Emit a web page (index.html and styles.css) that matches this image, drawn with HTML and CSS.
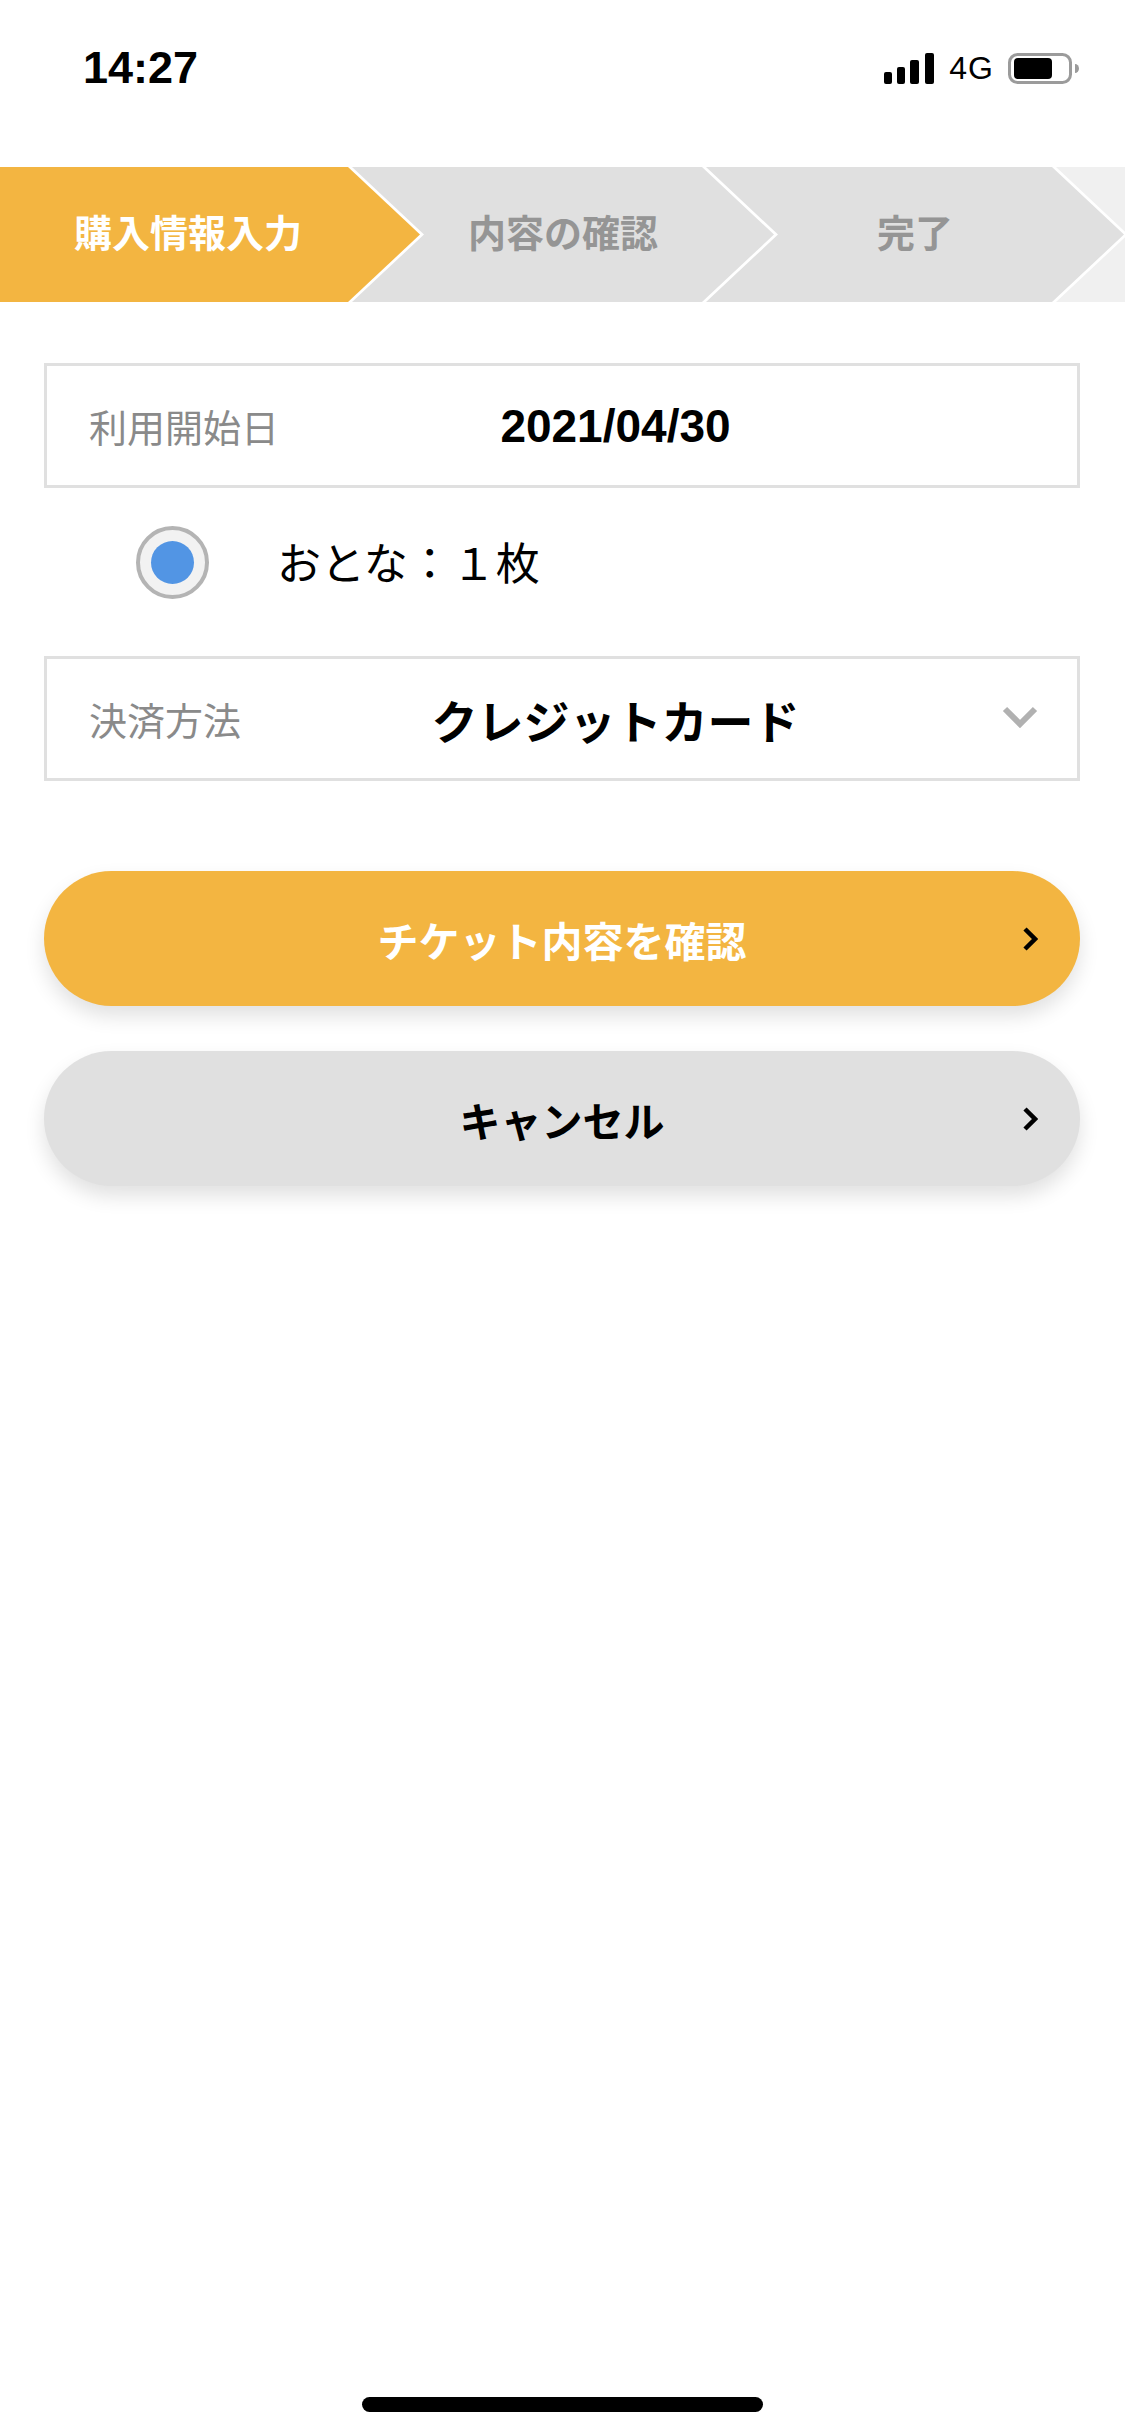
FILE: index.html
```html
<!DOCTYPE html>
<html lang="ja">
<head>
    <meta charset="UTF-8">
    <title>購入情報入力</title>
    <link rel="stylesheet" href="styles.css">
</head>
<body>
    <div class="screen">
        <div class="status-bar">
            <span class="clock">14:27</span>
            <div class="status-icons">
                <svg width="51" height="31" viewBox="0 0 51 31">
                    <rect x="0" y="19" width="8" height="12" rx="2" fill="#000"/>
                    <rect x="13" y="14" width="8" height="17" rx="2" fill="#000"/>
                    <rect x="26" y="7" width="9" height="24" rx="2" fill="#000"/>
                    <rect x="41" y="0" width="9" height="31" rx="2" fill="#000"/>
                </svg>
                <span class="network">4G</span>
                <svg width="73" height="31" viewBox="0 0 73 31">
                    <rect x="1.5" y="1.5" width="61" height="28" rx="8" fill="none" stroke="#9b9b9b" stroke-width="3"/>
                    <rect x="6" y="5" width="38" height="21" rx="4" fill="#000"/>
                    <path d="M67 11 a4 4.5 0 0 1 0 9 z" fill="#9b9b9b"/>
                </svg>
            </div>
        </div>

        <div class="steps">
            <div class="step step-first is-active">購入情報入力</div>
            <div class="step step-mid">内容の確認</div>
            <div class="step step-last">完了</div>
            <div class="step-rest"></div>
        </div>

        <main class="form">
            <div class="field">
                <span class="field-label">利用開始日</span>
                <span class="field-value">2021/04/30</span>
                <span></span>
            </div>

            <label class="radio-row">
                <span class="radio"><span class="radio-dot"></span></span>
                <span class="radio-text">おとな：１枚</span>
            </label>

            <div class="field">
                <span class="field-label">決済方法</span>
                <span class="field-value">クレジットカード</span>
                <svg class="field-arrow" width="36" height="22" viewBox="0 0 36 22">
                    <polyline points="3,3 18,18 33,3" fill="none" stroke="#b1b1b1" stroke-width="6"/>
                </svg>
            </div>

            <button class="btn btn-primary">
                <span></span>
                <span class="btn-text">チケット内容を確認</span>
                <svg class="btn-arrow" width="16" height="26" viewBox="0 0 16 26">
                    <polyline points="3,3 13,13 3,23" fill="none" stroke="#000" stroke-width="4.5"/>
                </svg>
            </button>

            <button class="btn btn-secondary">
                <span></span>
                <span class="btn-text">キャンセル</span>
                <svg class="btn-arrow" width="16" height="26" viewBox="0 0 16 26">
                    <polyline points="3,3 13,13 3,23" fill="none" stroke="#000" stroke-width="4.5"/>
                </svg>
            </button>
        </main>

        <div class="home-indicator"></div>
    </div>
</body>
</html>
```

FILE: styles.css
```css
body {
    margin: 0;
    background: #fff;
    font-family: "Liberation Sans", "Noto Sans CJK JP", sans-serif;
    color: #000;
}
.screen {
    display: flex;
    flex-direction: column;
    min-height: 100vh;
}
.status-bar {
    height: 167px;
    box-sizing: border-box;
    padding: 46px 44px 0 83px;
    display: flex;
    justify-content: space-between;
    align-items: flex-start;
}
.clock {
    font-size: 45px;
    line-height: 44px;
    font-weight: bold;
}
.status-icons {
    height: 44px;
    display: flex;
    align-items: center;
    gap: 14px;
}
.network {
    font-size: 32px;
    letter-spacing: 1px;
}
.steps {
    display: flex;
    height: 135px;
    background: #fff;
}
.step {
    height: 100%;
    flex: 0 0 auto;
    margin-right: -68px;
    padding-bottom: 8px;
    display: flex;
    align-items: center;
    justify-content: center;
    box-sizing: border-box;
    font-size: 38px;
    font-weight: bold;
    color: #959595;
    background: #e0e0e0;
}
.step.is-active {
    background: #f3b541;
    color: #fff;
}
.step-first {
    width: 420px;
    padding-right: 44px;
    clip-path: polygon(0 0, 348px 0, 420px 50%, 348px 100%, 0 100%);
}
.step-mid {
    width: 422px;
    clip-path: polygon(0 0, 350px 0, 422px 50%, 350px 100%, 0 100%, 72px 50%);
}
.step-last {
    width: 418px;
    clip-path: polygon(0 0, 346px 0, 418px 50%, 346px 100%, 0 100%, 72px 50%);
}
.step-rest {
    flex: 1;
    background: #f0f0f0;
    clip-path: polygon(0 0, 100% 0, 100% 100%, 0 100%, 72px 50%);
}
.form {
    flex: 1;
    padding: 61px 45px 0 44px;
    display: flex;
    flex-direction: column;
}
.field {
    height: 125px;
    box-sizing: border-box;
    border: 3px solid #e0e0e0;
    padding: 0 39px 0 42px;
    display: grid;
    grid-template-columns: 200px 1fr 96px;
    align-items: center;
}
.field-label {
    font-size: 38px;
    color: #8a8a8a;
}
.field-value {
    text-align: center;
    font-size: 46px;
    font-weight: bold;
}
.field-arrow {
    justify-self: end;
    margin-top: -4px;
}
.radio-row {
    height: 73px;
    margin: 38px 0 57px;
    padding-left: 92px;
    display: flex;
    align-items: center;
    gap: 68px;
}
.radio {
    width: 73px;
    height: 73px;
    box-sizing: border-box;
    border: 4px solid #b4b4b4;
    border-radius: 50%;
    background: #f2f2f2;
    display: flex;
    align-items: center;
    justify-content: center;
}
.radio-dot {
    width: 43px;
    height: 43px;
    border-radius: 50%;
    background: #5295e4;
}
.radio-text {
    font-size: 44px;
    margin-top: -4px;
}
.btn {
    height: 135px;
    border: none;
    border-radius: 68px;
    padding: 0 42px;
    display: grid;
    grid-template-columns: 1fr auto 1fr;
    align-items: center;
    font-family: inherit;
    font-size: 41px;
    font-weight: bold;
    box-shadow: 0 10px 20px rgba(0, 0, 0, 0.12);
    cursor: pointer;
}
.btn-primary {
    margin-top: 90px;
    background: #f3b541;
    color: #fff;
}
.btn-secondary {
    margin-top: 45px;
    background: #e0e0e0;
    color: #000;
}
.btn-arrow {
    justify-self: end;
}
.home-indicator {
    width: 401px;
    height: 15px;
    border-radius: 8px;
    background: #000;
    margin: 0 auto 24px;
}
```
